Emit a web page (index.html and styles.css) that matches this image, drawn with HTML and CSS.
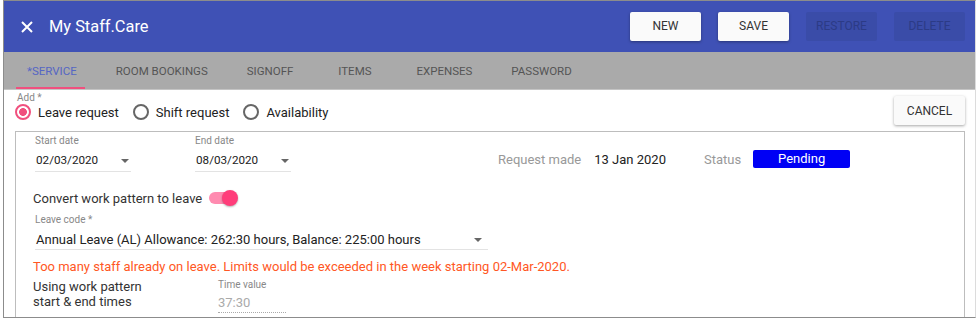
FILE: index.html
```html
<!DOCTYPE html>
<html lang="en">
<head>
    <meta charset="UTF-8">
    <title>My Staff.Care</title>
    <link rel="stylesheet" href="styles.css">
</head>
<body>
    <div class="window">
        <!-- Top app bar -->
        <header class="app-bar">
            <svg class="close-icon" width="12" height="12" viewBox="0 0 12 12">
                <path d="M1 1 L11 11 M11 1 L1 11" stroke="#fff" stroke-width="2" />
            </svg>
            <div class="app-title">My Staff.Care</div>
            <div class="actions">
                <button class="btn">NEW</button>
                <button class="btn">SAVE</button>
                <button class="btn btn-disabled">RESTORE</button>
                <button class="btn btn-disabled">DELETE</button>
            </div>
        </header>

        <!-- Tabs -->
        <nav class="tabs">
            <div class="tab tab-active">*SERVICE</div>
            <div class="tab">ROOM BOOKINGS</div>
            <div class="tab">SIGNOFF</div>
            <div class="tab">ITEMS</div>
            <div class="tab">EXPENSES</div>
            <div class="tab">PASSWORD</div>
        </nav>

        <main class="content">
            <div class="type-row">
                <div class="type-group">
                    <div class="small-label">Add *</div>
                    <div class="radios">
                        <label class="radio radio-checked"><span class="radio-dot"></span>Leave request</label>
                        <label class="radio"><span class="radio-dot"></span>Shift request</label>
                        <label class="radio"><span class="radio-dot"></span>Availability</label>
                    </div>
                </div>
                <button class="btn btn-cancel">CANCEL</button>
            </div>

            <section class="panel">
                <div class="dates-row">
                    <div class="field field-date">
                        <div class="small-label">Start date</div>
                        <div class="select-value">02/03/2020<span class="caret"></span></div>
                    </div>
                    <div class="field field-date">
                        <div class="small-label">End date</div>
                        <div class="select-value">08/03/2020<span class="caret"></span></div>
                    </div>
                    <div class="meta">
                        <span class="meta-label">Request made</span>
                        <span class="meta-value">13 Jan 2020</span>
                        <span class="meta-label meta-status">Status</span>
                        <span class="status-badge">Pending</span>
                    </div>
                </div>

                <div class="switch-row">
                    Convert work pattern to leave
                    <span class="switch"><span class="switch-track"></span><span class="switch-thumb"></span></span>
                </div>

                <div class="field field-leave">
                    <div class="small-label">Leave code *</div>
                    <div class="select-value">Annual Leave (AL) Allowance: 262:30 hours, Balance: 225:00 hours<span class="caret"></span></div>
                </div>

                <div class="error-text">Too many staff already on leave. Limits would be exceeded in the week starting 02-Mar-2020.</div>

                <div class="pattern-row">
                    <div class="pattern-text">Using work pattern<br>start &amp; end times</div>
                    <div class="field field-time">
                        <div class="small-label">Time value</div>
                        <div class="time-value">37:30</div>
                    </div>
                </div>
            </section>
        </main>
    </div>
</body>
</html>
```

FILE: styles.css
```css
/* Page */
body {
    margin: 0;
    background-color: #fff;
    font-family: Roboto, 'Liberation Sans', sans-serif;
    overflow: hidden;
}

.window {
    margin-left: 3px;
    width: 971px;
    height: 316px;
    border: 1px solid #8c8c8c;
    border-right-color: #dcdcdc;
    overflow: hidden;
}

/* App bar */
.app-bar {
    display: flex;
    align-items: center;
    height: 51px;
    padding: 0 10px 0 17px;
    background-color: #3f51b5;
}

.close-icon {
    display: block;
}

.app-title {
    margin-left: 16px;
    color: #fff;
    font-size: 16.4px;
}

.actions {
    display: flex;
    gap: 17px;
    margin-left: auto;
    margin-top: -1px;
}

.btn {
    width: 71px;
    height: 29px;
    padding: 0;
    border: none;
    border-radius: 2px;
    background-color: #fafafa;
    color: #333;
    font-family: inherit;
    font-size: 12px;
    box-shadow: 0 1px 3px rgba(0, 0, 0, 0.35);
}

.btn-disabled {
    background-color: #3a4ca8;
    color: #2c3b86;
    box-shadow: none;
}

/* Tabs */
.tabs {
    display: flex;
    height: 37px;
    padding-left: 3.5px;
    background-color: #aaa;
    border-bottom: 1px solid #c4c4c4;
}

.tab {
    position: relative;
    display: flex;
    align-items: center;
    justify-content: center;
    box-sizing: border-box;
    min-width: 84px;
    padding: 0 19.5px;
    color: #555;
    font-size: 11.5px;
}

.tab-active {
    color: #5566c4;
}

.tab-active::after {
    content: '';
    position: absolute;
    left: 8px;
    right: 11px;
    bottom: 0;
    height: 2px;
    background-color: #f0507e;
}

/* Content */
.content {
    padding: 0 10px 0 11px;
}

.type-row {
    display: flex;
    justify-content: space-between;
    align-items: flex-start;
}

.small-label {
    color: #888;
    font-size: 10px;
    line-height: 12px;
}

.type-group .small-label {
    margin-top: 2px;
    padding-left: 2px;
}

.radios {
    display: flex;
    gap: 14px;
    height: 16px;
    align-items: center;
}

.radio {
    display: flex;
    align-items: center;
    gap: 7px;
    color: #222;
    font-size: 13px;
}

.radio-dot {
    box-sizing: border-box;
    width: 16px;
    height: 16px;
    border: 2px solid #666;
    border-radius: 50%;
}

.radio-checked .radio-dot {
    border-color: #f0507e;
    background: radial-gradient(circle, #f0507e 0 3.6px, transparent 4.2px);
}

.btn-cancel {
    margin-top: 6px;
    font-size: 12px;
}

/* Bordered panel */
.panel {
    margin-top: 6px;
    height: 200px;
    padding: 0 0 0 17px;
    border: 1px solid #bdbdbd;
    border-bottom: none;
}

.dates-row {
    display: flex;
    align-items: flex-start;
    height: 55px;
}

.field {
    padding-left: 2px;
}

.field .small-label {
    margin-top: 3px;
}

.field-date {
    width: 96px;
    margin-right: 62px;
}

.select-value {
    position: relative;
    margin-top: 5px;
    height: 19px;
    border-bottom: 1px solid #e3e3e3;
    color: #222;
    font-size: 11.7px;
    line-height: 16px;
    padding-left: 1px;
}

.caret {
    position: absolute;
    right: 6px;
    top: 7px;
    border-left: 4px solid transparent;
    border-right: 4px solid transparent;
    border-top: 4px solid #666;
}

.field-date .caret {
    right: 2px;
}

.meta {
    display: flex;
    align-items: center;
    margin-left: 145px;
    margin-top: 18px;
    font-size: 13px;
}

.meta-label {
    color: #999;
}

.meta-value {
    margin-left: 13px;
    color: #222;
}

.meta-status {
    margin-left: 38px;
}

.status-badge {
    width: 97px;
    height: 18px;
    margin-left: 12px;
    border-radius: 2px;
    background-color: #0000f5;
    color: #fff;
    text-align: center;
    line-height: 18px;
}

/* Switch */
.switch-row {
    display: flex;
    align-items: center;
    height: 22px;
    color: #333;
    font-size: 13px;
}

.switch {
    position: relative;
    width: 30px;
    height: 16px;
    margin-left: 7px;
}

.switch-track {
    position: absolute;
    left: 0;
    top: 2px;
    width: 26px;
    height: 12px;
    border-radius: 6px;
    background-color: #ff8bb0;
}

.switch-thumb {
    position: absolute;
    left: 13px;
    top: 0;
    width: 16px;
    height: 16px;
    border-radius: 50%;
    background-color: #ff3d7a;
    box-shadow: 0 1px 2px rgba(0, 0, 0, 0.3);
}

.field-leave {
    width: 453px;
}

.field-leave .small-label {
    margin-top: 5px;
}

.field-leave .select-value {
    height: 17px;
    padding-top: 1px;
    font-size: 13px;
}

.error-text {
    margin-top: 8px;
    color: #ff5724;
    font-size: 13px;
    line-height: 17px;
}

.pattern-row {
    display: flex;
    margin-top: 4px;
}

.pattern-text {
    width: 183px;
    color: #333;
    font-size: 13px;
    line-height: 15px;
}

.field-time .small-label {
    margin-top: 0;
}

.time-value {
    width: 68px;
    margin-top: 4px;
    padding-bottom: 2px;
    border-bottom: 1px dotted #aaa;
    color: #aaa;
    font-size: 13px;
}
```
